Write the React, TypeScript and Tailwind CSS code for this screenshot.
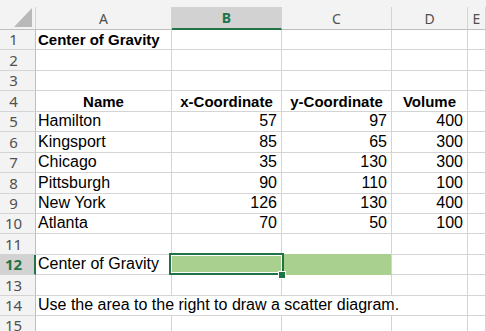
import React from 'react';

// Column template shared by the header and every sheet row:
// row header | A | B | C | D | E
const COLS = 'grid grid-cols-[36px_136px_110px_110px_76px_1fr]';

// Excel rows render at ~20.4px, so heights alternate between 20 and 21
const ROW_H = [
    'h-[20px]', 'h-[21px]', 'h-[20px]', 'h-[21px]', 'h-[20px]',
    'h-[21px]', 'h-[20px]', 'h-[21px]', 'h-[20px]', 'h-[20px]',
    'h-[21px]', 'h-[20px]', 'h-[21px]', 'h-[20px]', 'h-[20px]',
];

const DATA = [
    ['Hamilton', 57, 97, 400],
    ['Kingsport', 85, 65, 300],
    ['Chicago', 35, 130, 300],
    ['Pittsburgh', 90, 110, 100],
    ['New York', 126, 130, 400],
    ['Atlanta', 70, 50, 100],
];

const NORMAL = 'text-[16px] leading-[18px] pb-[1px]';
const BOLD = 'font-bold text-[15px] leading-[17px] pb-[1px]';

const RowHead = ({ n, active }: { n: number; active?: boolean }) => (
    <div
        className={
            active
                ? "flex items-center justify-center pr-[7px] bg-[#d2d2d2] border-r-2 border-r-[#217346] border-b border-b-[#d4d4d4] font-['Noto_Sans',sans-serif] text-[15px] leading-[19px] font-bold text-[#217346]"
                : "flex items-center justify-center pr-[8px] bg-[#f3f3f3] border-r border-r-[#bfbfbf] border-b border-b-[#d4d4d4] font-['Noto_Sans',sans-serif] text-[15px] leading-[19px] text-[#505050]"
        }
    >
        {n}
    </div>
);

const Cell = ({
    children,
    className = '',
    type = NORMAL,
}: {
    children?: React.ReactNode;
    className?: string;
    type?: string;
}) => (
    <div className={`relative flex items-end border-r border-b border-[#d4d4d4] whitespace-nowrap ${type} ${className}`}>
        {children}
    </div>
);

const Num = ({ v }: { v: number }) => <Cell className="justify-end pr-[4px]">{v}</Cell>;

const Bold = ({ children }: { children: React.ReactNode }) => (
    <Cell type={BOLD} className="justify-center">{children}</Cell>
);

export default function App() {
    const letters = ['A', 'B', 'C', 'D', 'E'];

    return (
        <div className="w-[486px] h-[331px] overflow-hidden bg-white text-black font-['Liberation_Sans',Arial,sans-serif]">
            {/* Column headers */}
            <div className="h-[30px] bg-[#f3f3f3] flex flex-col">
                <div className="h-[7px]"></div>
                <div className={`${COLS} h-[23px]`}>
                    <div className="relative border-r border-r-[#d4d4d4] border-b border-b-[#bfbfbf]">
                        <svg className="absolute left-[14px] top-[1px]" width="18" height="19" viewBox="0 0 18 19">
                            <polygon points="18,0 18,19 0,19" fill="#b9b9b9" />
                        </svg>
                    </div>
                    {letters.map((l) => (
                        <div
                            key={l}
                            className={
                                l === 'B'
                                    ? "flex items-center justify-center bg-[#d2d2d2] border-r border-r-[#d4d4d4] border-b-2 border-b-[#217346] font-['Noto_Sans',sans-serif] text-[14px] leading-[19px] font-bold text-[#217346]"
                                    : "flex items-center justify-center border-r border-r-[#d4d4d4] border-b border-b-[#bfbfbf] font-['Noto_Sans',sans-serif] text-[14px] leading-[19px] text-[#505050]"
                            }
                        >
                            {l}
                        </div>
                    ))}
                </div>
            </div>

            {/* Row 1 */}
            <div className={`${COLS} ${ROW_H[0]}`}>
                <RowHead n={1} />
                <Cell type={BOLD} className="pl-[2px]">Center of Gravity</Cell>
                <Cell /><Cell /><Cell /><Cell />
            </div>

            {/* Rows 2-3 */}
            {[2, 3].map((n) => (
                <div key={n} className={`${COLS} ${ROW_H[n - 1]}`}>
                    <RowHead n={n} />
                    <Cell /><Cell /><Cell /><Cell /><Cell />
                </div>
            ))}

            {/* Row 4: table heading */}
            <div className={`${COLS} ${ROW_H[3]}`}>
                <RowHead n={4} />
                <Bold>Name</Bold>
                <Bold>x-Coordinate</Bold>
                <Bold>y-Coordinate</Bold>
                <Bold>Volume</Bold>
                <Cell />
            </div>

            {/* Rows 5-10: data */}
            {DATA.map((r, i) => (
                <div key={r[0]} className={`${COLS} ${ROW_H[4 + i]}`}>
                    <RowHead n={5 + i} />
                    <Cell className="pl-[2px]">{r[0]}</Cell>
                    <Num v={r[1] as number} />
                    <Num v={r[2] as number} />
                    <Num v={r[3] as number} />
                    <Cell />
                </div>
            ))}

            {/* Row 11 */}
            <div className={`${COLS} ${ROW_H[10]}`}>
                <RowHead n={11} />
                <Cell /><Cell /><Cell /><Cell /><Cell />
            </div>

            {/* Row 12: selected answer cells */}
            <div className={`${COLS} ${ROW_H[11]}`}>
                <RowHead n={12} active />
                <Cell className="pl-[2px]">Center of Gravity</Cell>
                <Cell className="bg-[#a9d08e] border-b-[#a9d08e]">
                    <div className="absolute z-10 -left-[3px] -right-[3px] -top-[2px] -bottom-[1px] border-2 border-[#217346]">
                        <div className="w-full h-full border border-white bg-[#a9d08e]"></div>
                        <div className="absolute left-[107px] top-[16px] w-[8px] h-[8px] bg-[#217346] border border-white"></div>
                    </div>
                </Cell>
                <Cell className="bg-[#a9d08e] border-b-[#a9d08e]">
                    <div className="absolute -left-[1px] right-0 -top-[1px] -bottom-[1px] bg-[#a9d08e]"></div>
                </Cell>
                <Cell /><Cell />
            </div>

            {/* Row 13 */}
            <div className={`${COLS} ${ROW_H[12]}`}>
                <RowHead n={13} />
                <Cell /><Cell /><Cell /><Cell /><Cell />
            </div>

            {/* Row 14: instruction overflows across A-D */}
            <div className={`${COLS} ${ROW_H[13]}`}>
                <RowHead n={14} />
                <Cell className="col-span-4 pl-[2px]">Use the area to the right to draw a scatter diagram.</Cell>
                <Cell />
            </div>

            {/* Row 15 */}
            <div className={`${COLS} ${ROW_H[14]}`}>
                <RowHead n={15} />
                <Cell /><Cell /><Cell /><Cell /><Cell />
            </div>
        </div>
    );
}
